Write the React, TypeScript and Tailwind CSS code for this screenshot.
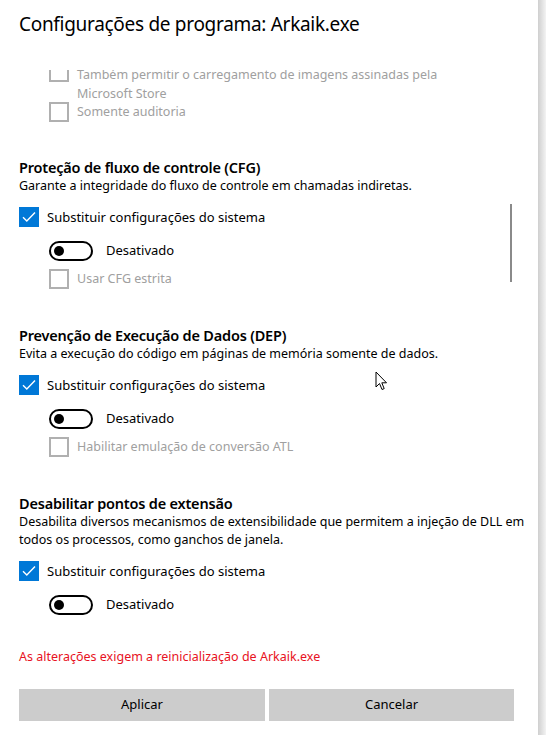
import React from "react";

const font = { fontFamily: '"Noto Sans", "Open Sans", sans-serif' };

const CheckBox = ({ checked, disabled }: { checked?: boolean; disabled?: boolean }) => {
  if (checked) {
    return (
      <div className="w-5 h-5 shrink-0 bg-[#0078d7] flex items-center justify-center">
        <svg width="14" height="12" viewBox="0 0 14 12" fill="none">
          <path d="M1 6.2 L4.8 10 L13 1.6" stroke="white" strokeWidth="1.4" />
        </svg>
      </div>
    );
  }
  return (
    <div
      className={`w-5 h-5 shrink-0 border-2 ${disabled ? "border-[#b0b0b0]" : "border-black"} bg-white`}
    />
  );
};

const Toggle = () => (
  <div className="flex items-center h-5 ml-[30px]">
    <div className="w-[44px] h-5 border-2 border-black rounded-full flex items-center pl-[3px]">
      <div className="w-[10px] h-[10px] rounded-full bg-black" />
    </div>
    <span className="ml-[13px] text-[13px] text-black">Desativado</span>
  </div>
);

const CheckRow = ({
  label,
  checked,
  disabled,
  indent,
  className,
}: {
  label: string;
  checked?: boolean;
  disabled?: boolean;
  indent?: boolean;
  className?: string;
}) => (
  <div className={`flex items-center h-5 gap-[8px] ${indent ? "ml-[30px]" : ""} ${className ?? ""}`}>
    <CheckBox checked={checked} disabled={disabled} />
    <span
      className={`leading-5 whitespace-nowrap ${disabled ? "text-[12.5px] text-[#a0a0a0]" : "text-[13px] text-black"}`}
    >
      {label}
    </span>
  </div>
);

const Section = ({
  title,
  desc,
  extra,
  last,
}: {
  title: string;
  desc: React.ReactNode;
  extra?: string;
  last?: boolean;
}) => (
  <div className={last ? "" : "mb-[36px]"}>
    <div className="text-[14.5px] leading-5 font-semibold tracking-[-0.2px] text-black">{title}</div>
    <div className="text-[12.5px] leading-[18px] text-black whitespace-nowrap">{desc}</div>
    <CheckRow label="Substituir configurações do sistema" checked className="mt-[12px]" />
    <div className="mt-[14px]">
      <Toggle />
    </div>
    {extra && <CheckRow label={extra} disabled indent className="mt-[8px]" />}
  </div>
);

export default function App() {
  return (
    <div className="w-[546px] h-[735px] bg-white flex overflow-hidden" style={font}>
      <div className="relative w-[538px] h-full flex flex-col">
        <div className="h-[70px] shrink-0 pl-[19px] pt-[10px]">
          <h1 className="text-[19px] leading-7 tracking-[-0.3px] text-black">
            Configurações de programa: Arkaik.exe
          </h1>
        </div>

        <div className="h-[568px] shrink-0 overflow-hidden pl-[19px] pr-[24px]">
          <div className="-mt-[8px]">
            <div className="h-[40px] flex items-start gap-[8px] ml-[30px]">
              <CheckBox disabled />
              <span className="mt-[3px] text-[12.5px] leading-[19px] text-[#a0a0a0]">
                Também permitir o carregamento de imagens assinadas pela
                <br />
                Microsoft Store
              </span>
            </div>
            <CheckRow label="Somente auditoria" disabled indent />
          </div>

          <div className="mt-[35px]">
            <Section
              title="Proteção de fluxo de controle (CFG)"
              desc="Garante a integridade do fluxo de controle em chamadas indiretas."
              extra="Usar CFG estrita"
            />
            <Section
              title="Prevenção de Execução de Dados (DEP)"
              desc="Evita a execução do código em páginas de memória somente de dados."
              extra="Habilitar emulação de conversão ATL"
            />
            <Section
              title="Desabilitar pontos de extensão"
              desc={
                <>
                  Desabilita diversos mecanismos de extensibilidade que permitem a injeção de DLL em
                  <br />
                  todos os processos, como ganchos de janela.
                </>
              }
              last
            />
          </div>
        </div>

        <div className="pl-[19px] mt-[9px] text-[12.5px] leading-5 text-[#e81123]">
          As alterações exigem a reinicialização de Arkaik.exe
        </div>

        <div className="flex gap-[4px] pl-[19px] mt-[22px]">
          <button className="w-[246px] h-8 bg-[#cccccc] text-[13px] text-black">Aplicar</button>
          <button className="w-[245px] h-8 bg-[#cccccc] text-[13px] text-black">Cancelar</button>
        </div>

        {/* scrollbar thumb */}
        <div className="absolute left-[510px] top-[204px] w-[2px] h-[78px] bg-[#8a8a8a]" />

        {/* mouse cursor */}
        <svg className="absolute left-[375px] top-[371px]" width="13" height="20" viewBox="0 0 13 20">
          <path
            d="M1 1 L1 16 L4.5 12.5 L7 18.5 L9.2 17.6 L6.8 11.8 L11.5 11.8 Z"
            fill="white"
            stroke="black"
            strokeWidth="1"
            strokeLinejoin="round"
          />
        </svg>
      </div>
      <div className="w-2 h-full bg-gradient-to-r from-[#cfcfcf] to-[#f3f3f3]" />
    </div>
  );
}
